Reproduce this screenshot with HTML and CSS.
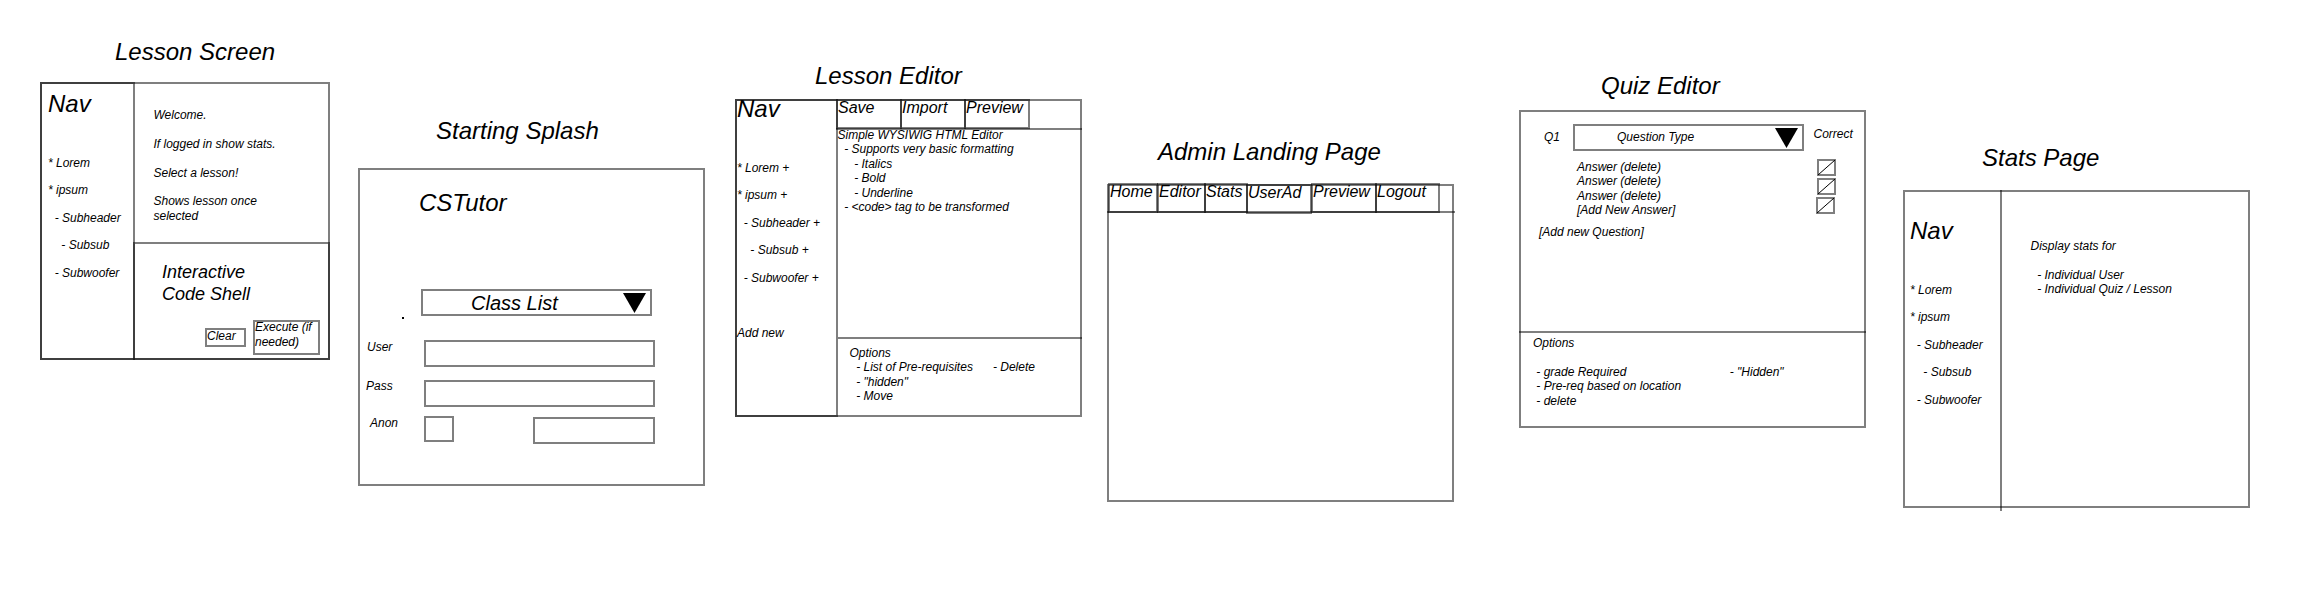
FILE: index.html
```html
<!DOCTYPE html>
<html lang="en">
<head>
<meta charset="utf-8">
<title>CSTutor wireframes</title>
<link rel="stylesheet" href="styles.css">
</head>
<body>
<main class="board">

<section class="screen lesson">
<h2 class="title">Lesson Screen</h2>
<div class="box frame">
<nav class="box nav"><h3 class="nav-title">Nav</h3><pre class="nav-list">* Lorem
* ipsum
  - Subheader
    - Subsub
  - Subwoofer</pre></nav>
<div class="lesson-main">
<pre class="text welcome">Welcome.

If logged in show stats.

Select a lesson!

Shows lesson once
selected</pre>
<div class="box shell">
<p class="shell-title">Interactive<br>Code Shell</p>
<div class="shell-actions"><div class="box clear">Clear</div><div class="box execute">Execute (if<br>needed)</div></div>
</div>
</div>
</div>
</section>

<section class="screen splash">
<h2 class="title">Starting Splash</h2>
<div class="box frame">
<h3 class="brand">CSTutor</h3>
<div class="box select class-list"><span>Class List</span><svg class="arrow" viewBox="0 0 23 20"><path d="M0 0H23L11.5 20Z"/></svg></div>
<i class="dot"></i>
<div class="field user"><span>User</span><div class="box input"></div></div>
<div class="field pass"><span>Pass</span><div class="box input"></div></div>
<div class="field anon"><span>Anon</span><div class="box check"></div><div class="box submit"></div></div>
</div>
</section>

<section class="screen editor">
<h2 class="title">Lesson Editor</h2>
<div class="box frame">
<nav class="box nav"><h3 class="nav-title">Nav</h3><pre class="nav-list">* Lorem +
* ipsum +
  - Subheader +
    - Subsub +
  - Subwoofer +

Add new</pre></nav>
<div class="editor-main">
<div class="toolbar"><div class="box tab">Save</div><div class="box tab">Import</div><div class="box tab">Preview</div></div>
<pre class="text editor-text">Simple WYSIWIG HTML Editor
  - Supports very basic formatting
     - Italics
     - Bold
     - Underline
  - &lt;code&gt; tag to be transformed</pre>
<pre class="text editor-options">Options
  - List of Pre-requisites      - Delete
  - "hidden"
  - Move</pre>
</div>
</div>
</section>

<section class="screen admin">
<h2 class="title">Admin Landing Page</h2>
<div class="box frame">
<div class="menu"><div class="box tab home">Home</div><div class="box tab edit">Editor</div><div class="box tab stat">Stats</div><div class="box tab userad">UserAd</div><div class="box tab prev">Preview</div><div class="box tab logout">Logout</div></div>
</div>
</section>

<section class="screen quiz">
<h2 class="title">Quiz Editor</h2>
<div class="box frame">
<div class="question"><span class="number">Q1</span><div class="box select question-type"><span>Question Type</span><svg class="arrow" viewBox="0 0 23 20"><path d="M0 0H23L11.5 20Z"/></svg></div><span class="correct">Correct</span></div>
<div class="answers">
<pre class="text">Answer (delete)
Answer (delete)
Answer (delete)
[Add New Answer]</pre>
<div class="marks">
<svg class="box mark" viewBox="0 0 19 17"><path d="M1 16L18 1"/></svg>
<svg class="box mark" viewBox="0 0 19 17"><path d="M1 16L18 1"/></svg>
<svg class="box mark last" viewBox="0 0 19 17"><path d="M1 16L18 1"/></svg>
</div>
</div>
<p class="text add-question">[Add new Question]</p>
<pre class="text quiz-options">Options

 - grade Required                               - "Hidden"
 - Pre-req based on location
 - delete</pre>
</div>
</section>

<section class="screen stats">
<h2 class="title">Stats Page</h2>
<div class="box frame">
<nav class="nav"><h3 class="nav-title">Nav</h3><pre class="nav-list">* Lorem
* ipsum
  - Subheader
    - Subsub
  - Subwoofer</pre></nav>
<pre class="text stats-text">Display stats for

  - Individual User
  - Individual Quiz / Lesson</pre>
</div>
</section>

</main>
</body>
</html>
```
FILE: styles.css
```css
* { box-sizing: border-box; margin: 0; padding: 0; }
body {
  background: #fff;
  color: #000;
  font: italic 12px/14.4px "Liberation Sans", Arial, sans-serif;
}
pre { font: inherit; white-space: pre; }
.board { position: relative; width: 2300px; height: 595px; overflow: hidden; }

/* translucent strokes darken wherever two boxes share an edge */
.box { box-shadow: inset 0 0 0 2px rgba(0, 0, 0, .5); }

.screen { position: absolute; width: 347px; }
.title { padding-top: 1px; font-size: 24px; font-weight: 400; line-height: 27px; white-space: nowrap; }
.frame { width: 347px; height: 318px; }
.nav-title { font-size: 24px; font-weight: 400; line-height: 27.6px; }
.nav-list { margin-top: 32px; line-height: 27.6px; }
.tab { font-size: 16px; line-height: 18px; white-space: nowrap; }

.lesson { left: 40px; top: 37px; }
.lesson .title { margin: 0 0 17px 75px; }
.lesson .frame { display: grid; grid-template-columns: 95px 195px; width: 290px; height: 278px; }
.lesson .nav { padding: 8px 0 0 8px; }
.lesson-main { display: flex; flex-direction: column; }
.welcome { height: 160px; padding: 26px 0 0 18.5px; }
.shell { flex: 1; margin-left: -2px; padding: 20px 10px 0 29px; }
.shell-title { font-size: 18px; line-height: 21.6px; }
.shell-actions { display: flex; justify-content: flex-end; gap: 7px; margin-top: 15px; }
.clear { width: 41px; height: 19px; margin-top: 8px; padding: 1px 0 0 2px; }
.execute { width: 67px; height: 35px; padding: 0 0 0 2px; white-space: nowrap; }

.splash { left: 358px; top: 116px; }
.splash .title { margin: 0 0 24px 78px; }
.splash .frame { padding-top: 21px; }
.brand { margin-left: 61px; font-size: 24px; font-weight: 400; line-height: 28px; }
.select { display: flex; width: 231px; height: 27px; }
.arrow { width: 23px; height: 20px; margin-left: auto; }
.class-list { margin: 72px 0 0 63px; padding: 4px 6px 0 50px; font-size: 20px; line-height: 20px; }
.dot { display: block; width: 2px; height: 2px; margin: 1px 0 0 44px; background: #000; }
.field { display: flex; }
.field span { width: 58px; }
.input { width: 231px; height: 27px; }
.user { margin: 21px 0 0 8px; }
.pass { margin: 13px 0 0 8px; }
.anon { margin: 9px 0 0 8px; }
.user span { padding-left: 1px; }
.pass span { margin-top: -1px; }
.anon span { padding-left: 4px; }
.check { width: 30px; height: 26px; }
.submit { width: 122px; height: 27px; margin: 1px 0 0 79px; }

.editor { left: 735px; top: 61px; }
.editor .title { margin: 0 0 10px 80px; }
.editor .frame { display: grid; grid-template-columns: 103px 244px; }
.editor .nav { padding: 0 0 0 2px; }
.editor .nav-title { margin-top: -4px; }
.editor-main { display: flex; flex-direction: column; margin-left: -2px; }
.toolbar { display: flex; height: 31px; border-bottom: 2px solid rgba(0, 0, 0, .5); }
.toolbar .tab { width: 66px; height: 30px; margin-right: -2px; padding-left: 2px; }
.editor-text { height: 207px; padding: 0 0 0 1.5px; margin-top: -2px; }
.editor-options { flex: 1; margin: 2px 0 0 2px; border-top: 2px solid rgba(0, 0, 0, .5); padding: 7px 0 0 11.5px; }

.admin { left: 1107px; top: 137px; }
.admin .title { margin: 0 0 19px 51px; }
.menu { display: flex; width: 348px; height: 29px; border-bottom: 2px solid rgba(0, 0, 0, .5); }
.menu .tab { flex: none; height: 30px; margin-top: -1px; padding-left: 2px; }
.menu .home { width: 50px; margin-left: 1px; }
.menu .edit { width: 49px; margin-left: -1px; }
.menu .stat { width: 44px; margin-left: -2px; }
.menu .userad { width: 66px; margin: 0 0 0 -2px; }
.menu .prev { width: 66px; margin-left: -1px; }
.menu .logout { width: 65px; margin-left: -2px; }

.quiz { left: 1519px; top: 71px; }
.quiz .title { margin: 0 0 11px 82px; }
.quiz .frame { display: flex; flex-direction: column; padding-top: 14px; }
.question { display: flex; }
.number { width: 54px; padding: 6px 0 0 25px; }
.question-type { padding: 4px 6px 0 44px; }
.question-type span { padding-top: 2px; }
.correct { padding: 3px 0 0 9.5px; }
.answers { display: flex; justify-content: space-between; margin-top: 8px; padding: 0 30px 0 58px; }
.answers .text { padding-top: 1px; }
.marks { display: flex; flex-direction: column; gap: 2px; }
.mark { width: 19px; height: 17px; }
.mark.last { margin-left: -1px; }
.mark path { fill: none; stroke: #000; stroke-width: 1; }
.add-question { margin: 7px 0 0 20px; }
.quiz-options { margin-top: auto; height: 97px; border-top: 2px solid rgba(0, 0, 0, .5); padding: 3px 0 0 14px; }

.stats { left: 1903px; top: 143px; }
.stats .title { margin: 0 0 19px 79px; }
.stats .frame { display: grid; grid-template-columns: 99px 1fr; }
.stats .nav { height: 321px; border-right: 2px solid rgba(0, 0, 0, .5); padding: 27px 0 0 7px; }
.stats-text { padding: 49px 0 0 28.5px; }
```
